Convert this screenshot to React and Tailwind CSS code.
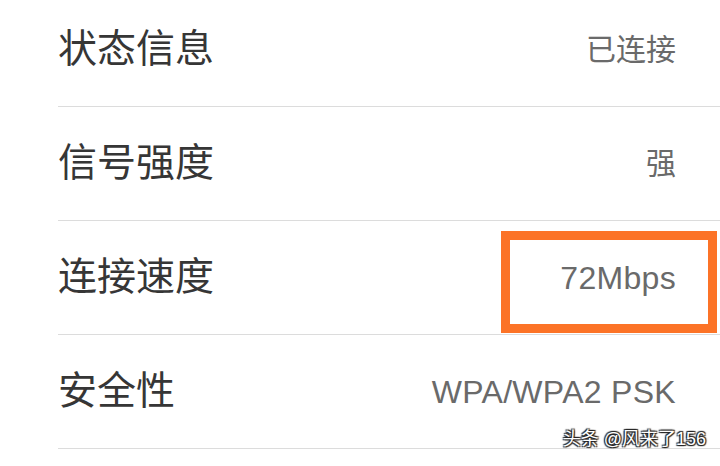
const rows = [
  { label: '状态信息', value: '已连接', cjk: true },
  { label: '信号强度', value: '强', cjk: true },
  { label: '连接速度', value: '72Mbps', highlight: true },
  { label: '安全性', value: 'WPA/WPA2 PSK' },
]

export default function App() {
  return (
    <div className="relative h-[466px] w-[720px] overflow-hidden bg-white font-['Liberation_Sans','Noto_Sans_CJK_SC',sans-serif]">
      <div className="-mt-[7px] pl-[58px]">
        {rows.map((row) => (
          <Row key={row.label} {...row} />
        ))}
      </div>
      <div className="absolute right-[14px] top-[427px] text-[18px] leading-[24px] text-white [text-shadow:1px_1px_1px_#222,-1px_-1px_1px_#222,1px_-1px_1px_#222,-1px_1px_1px_#222]">
        头条 @风来了156
      </div>
    </div>
  )
}

function Row({ label, value, cjk, highlight }) {
  return (
    <div className="relative flex h-[114px] items-center justify-between border-b border-[#dcdcdc] pr-[44px]">
      <span className="text-[39px] text-[#363636]">{label}</span>
      <span className={cjk ? 'text-[30px] text-[#6a6a6a]' : 'text-[32px] tracking-[0.3px] text-[#6a6a6a]'}>{value}</span>
      {highlight && (
        <div className="absolute right-[3px] top-[10px] h-[102px] w-[216px] border-[9px] border-[#fc7327]" />
      )}
    </div>
  )
}
